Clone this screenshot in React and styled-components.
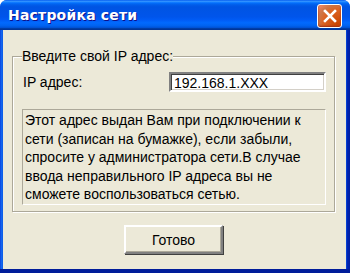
import React from 'react'
import styled, { createGlobalStyle } from 'styled-components'

const GlobalStyle = createGlobalStyle`
html, body {
  margin: 0;
  padding: 0;
  background: #ffffff;
}
`

const Window = styled.div`
width: 350px;
height: 273px;
display: flex;
flex-direction: column;
border-radius: 7px 7px 0 0;
overflow: hidden;
background: #0a4fdf;
font-family: "Liberation Sans", Arial, sans-serif;
`

const TitleBar = styled.div`
height: 30px;
flex: none;
display: flex;
align-items: center;
justify-content: space-between;
padding: 0 8px 0 8px;
box-sizing: border-box;
background: linear-gradient(to bottom, #0058ee 0%, #3593ff 4%, #288eff 6%, #127dff 8%, #036ffc 10%, #0262ee 14%, #0057e5 20%, #0054e3 24%, #0055eb 56%, #005bf5 66%, #026afe 76%, #0062ef 86%, #0052d6 92%, #0040ab 94%, #003092 100%);
`

const Title = styled.span`
color: #ffffff;
font-family: "DejaVu Sans", Verdana, sans-serif;
font-weight: bold;
font-size: 14px;
letter-spacing: 0.2px;
text-shadow: 1px 1px 0 #0f1089;
`

const CloseButton = styled.button`
width: 25px;
height: 24px;
padding: 0;
margin-top: 2px;
display: flex;
align-items: center;
justify-content: center;
border: 1px solid #ffffff;
border-radius: 3px;
background: radial-gradient(circle at 85% 85%, #cc4600 0%, #dc6527 55%, #cd7546 70%, transparent 90%), linear-gradient(#ec8a68, #d9502a);
box-shadow: inset 0 -1px 2px #a12e10;
`

const Frame = styled.div`
flex: 1;
display: flex;
padding: 0 4px 4px 3px;
background: linear-gradient(to right, #0831d9 0, #166aee 1px, #0c5ae8 3px, #0c5ae8 calc(100% - 4px), #0026b8 calc(100% - 3px), #001ea0 100%);
box-shadow: inset 0 -4px 0 #001c9a;
`

const Body = styled.div`
flex: 1;
background: #ece9d8;
display: flex;
flex-direction: column;
padding: 19px 11px 0 9px;
font-size: 14px;
color: #000000;
`

const Group = styled.fieldset`
margin: 0;
padding: 9px 8px 6px 9px;
border: 1px solid #aca899;
box-shadow: 1px 1px 0 #ffffff, inset 1px 1px 0 #ffffff;
display: flex;
flex-direction: column;
gap: 17px;
`

const Legend = styled.legend`
padding: 0;
margin-left: 0;
background: #ece9d8;
line-height: 14px;
`

const FieldRow = styled.div`
display: flex;
align-items: center;
justify-content: space-between;
`

const Label = styled.span`
padding-left: 1px;
`

const Input = styled.input`
width: 157px;
height: 20px;
box-sizing: border-box;
margin: 0;
padding: 1px 3px 0;
font-family: "Liberation Sans", Arial, sans-serif;
font-size: 14px;
color: #000000;
background: #ffffff;
border-style: solid;
border-width: 2px;
border-color: #808080 #ffffff #ffffff #808080;
box-shadow: inset 1px 1px 0 #404040, inset -1px -1px 0 #d4d0c8;
outline: none;
`

const InfoBox = styled.div`
height: 96px;
box-sizing: border-box;
padding: 1px 2px 0 2px;
border: 1px solid;
border-color: #aca899 #ffffff #ffffff #aca899;
line-height: 18.5px;
white-space: nowrap;
`

const Footer = styled.div`
display: flex;
justify-content: center;
padding-top: 13px;
`

const Button = styled.button`
width: 99px;
height: 29px;
box-sizing: border-box;
background: #ece9d8;
font-family: "Liberation Sans", Arial, sans-serif;
font-size: 14px;
color: #000000;
border-style: solid;
border-width: 2px;
border-color: #ffffff #808080 #808080 #ffffff;
box-shadow: inset -1px -1px 0 #aca899, 1px 1px 0 #404040;
`

const infoLines = [
  'Этот адрес выдан Вам при подключении к',
  'сети (записан на бумажке), если забыли,',
  'спросите у администратора сети.В случае',
  'ввода неправильного IP адреса вы не',
  'сможете воспользоваться сетью.',
]

export default function App() {
  return (
    <>
      <GlobalStyle />
      <Window>
        <TitleBar>
          <Title>Настройка сети</Title>
          <CloseButton aria-label="close">
            <svg width="14" height="14" viewBox="0 0 14 14">
              <path d="M2 2 L12 12 M12 2 L2 12" stroke="#ffffff" strokeWidth="2.6" strokeLinecap="square" />
            </svg>
          </CloseButton>
        </TitleBar>
        <Frame>
          <Body>
            <Group>
              <Legend>Введите свой IP адрес:</Legend>
              <FieldRow>
                <Label>IP адрес:</Label>
                <Input defaultValue="192.168.1.XXX" />
              </FieldRow>
              <InfoBox>
                {infoLines.map((line, i) => <div key={i}>{line}</div>)}
              </InfoBox>
            </Group>
            <Footer>
              <Button>Готово</Button>
            </Footer>
          </Body>
        </Frame>
      </Window>
    </>
  )
}
